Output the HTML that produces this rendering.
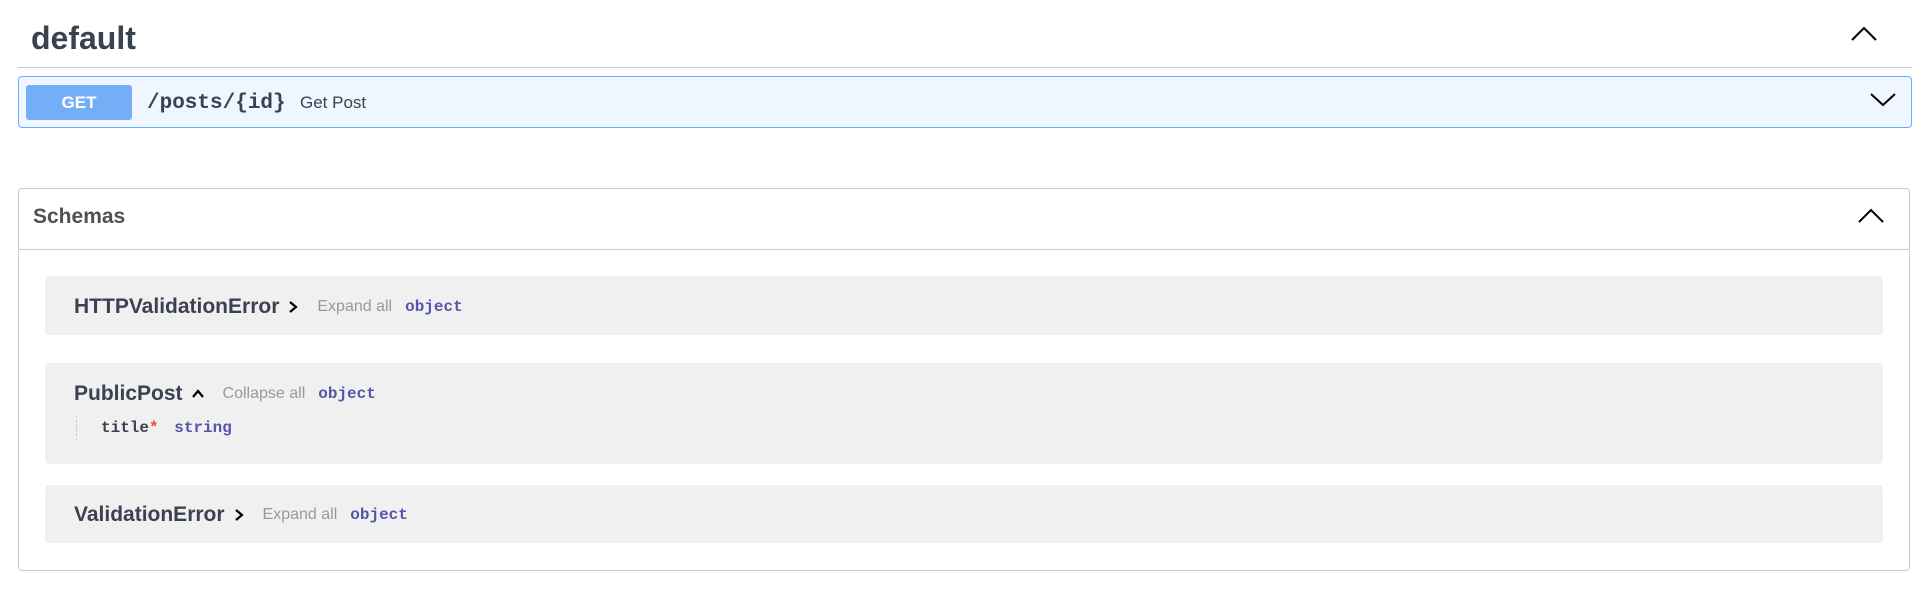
<!DOCTYPE html>
<html><head><style>
body{margin:0;background:#fff;font-family:"Liberation Sans",Arial,sans-serif;color:#3b4151;width:1924px;height:614px;overflow:hidden;position:relative}
.abs{position:absolute}
.mono{font-family:"Liberation Mono","DejaVu Sans Mono",monospace;font-weight:bold}
.model{position:absolute;left:45px;width:1838px;background:#f0f0f0;border-radius:4px}
.mt{position:absolute;left:29px;font-size:21px;line-height:24px;font-weight:bold;color:#3b4151;white-space:nowrap;display:flex;align-items:center}
.ea{color:#999;font-size:16px;font-weight:normal;margin-left:18px}
.ob{color:#55a;font-size:16px;margin-left:13px}
.chev{margin-left:8px}
</style></head><body>
<div class="abs" style="left:31px;top:20px;font-size:32px;font-weight:bold;">default</div>
<svg class="abs" style="left:1850px;top:25px" width="28" height="18"><path d="M2 15 L14 3 L26 15" fill="none" stroke="#000" stroke-width="2"/></svg>
<div class="abs" style="left:18px;top:67px;width:1894px;height:1px;background:#ccc"></div>
<div class="abs" style="left:18px;top:76px;width:1892px;height:50px;background:#eff6ff;border:1px solid #61affe;border-radius:4px;"></div>
<div class="abs" style="left:26px;top:85px;width:106px;height:35px;background:#73aef7;border-radius:3px;color:#fff;font-weight:bold;font-size:17px;text-align:center;line-height:35px">GET</div>
<div class="abs mono" style="left:147px;top:91px;font-size:21px;line-height:26px;color:#3b4151">/posts/{id}</div>
<div class="abs" style="left:300px;top:93px;font-size:17px;line-height:20px;color:#3b4151">Get Post</div>
<svg class="abs" style="left:1869px;top:90px" width="28" height="18"><path d="M2 4 L14 15 L26 4" fill="none" stroke="#000" stroke-width="2"/></svg>
<div class="abs" style="left:18px;top:188px;width:1890px;height:381px;border:1px solid #ccc;border-radius:4px"></div>
<div class="abs" style="left:19px;top:249px;width:1890px;height:1px;background:#ccc"></div>
<div class="abs" style="left:33px;top:205px;font-size:21px;font-weight:bold;color:#505050">Schemas</div>
<svg class="abs" style="left:1857px;top:207px" width="28" height="18"><path d="M2 15 L14 3 L26 15" fill="none" stroke="#000" stroke-width="2"/></svg>

<div class="model" style="top:276px;height:59px"><div class="mt" style="top:19px">HTTPValidationError<svg class="chev" width="12" height="14"><path d="M3 2 L9 7 L3 12" fill="none" stroke="#000" stroke-width="2.2"/></svg><span class="ea">Expand all</span><span class="ob mono">object</span></div></div>
<div class="model" style="top:363px;height:101px">
<div class="mt" style="top:19px">PublicPost<svg class="chev" width="14" height="12"><path d="M2 9 L7 3 L12 9" fill="none" stroke="#000" stroke-width="2.2"/></svg><span class="ea">Collapse all</span><span class="ob mono">object</span></div>
<div class="abs" style="left:31px;top:52px;height:26px;border-left:1px dashed #ccc"></div>
<div class="abs mono" style="left:56px;top:56px;font-size:16px;color:#3b4151">title<span style="color:#f93e3e">*</span> <span style="color:#55a;margin-left:6px">string</span></div>
</div>
<div class="model" style="top:485px;height:58px"><div class="mt" style="top:18px">ValidationError<svg class="chev" width="12" height="14"><path d="M3 2 L9 7 L3 12" fill="none" stroke="#000" stroke-width="2.2"/></svg><span class="ea">Expand all</span><span class="ob mono">object</span></div></div>
</body></html>
